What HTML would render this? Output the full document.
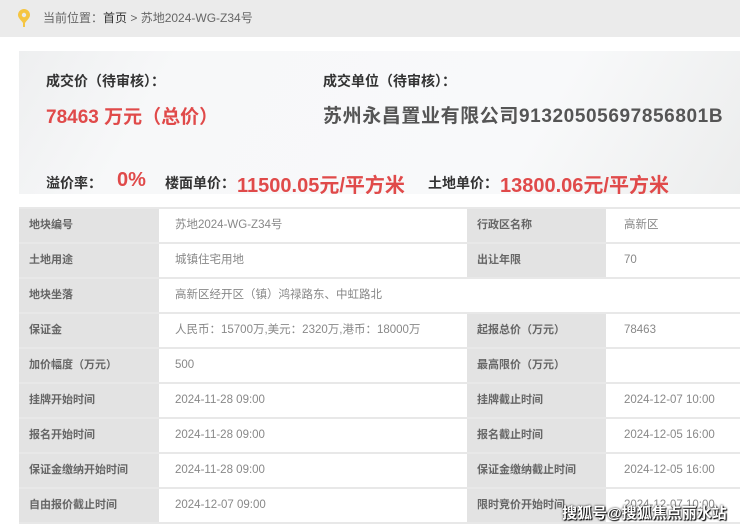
<!DOCTYPE html>
<html><head><meta charset="utf-8"><style>
*{margin:0;padding:0;box-sizing:border-box}
body{width:740px;height:529px;overflow:hidden;background:#fff;font-family:"Liberation Sans","Noto Sans CJK SC",sans-serif;position:relative}
.hdr{position:absolute;left:0;top:0;width:740px;height:37px;background:#ebebeb;font-size:12px;color:#666;line-height:37px;padding-left:43px}
.hdr b{font-weight:normal;color:#333}
.pin{position:absolute;left:18px;top:9px}
.box{position:absolute;left:19px;top:51px;width:721px;height:143px;background:linear-gradient(120deg,#eeeff0 0%,#f7f8f9 20%,#f8f9fa 70%,#eceded 100%);overflow:hidden}
.t{position:absolute;white-space:nowrap}
.lbl{font-size:14px;font-weight:bold;color:#333}
.red{color:#e04a4a;font-weight:bold}
.row{position:absolute;left:19px;width:721px;height:35px;border-top:2px solid #e8e8e8;font-size:11.5px}
.row div{position:absolute;top:0;height:33px;line-height:32px;white-space:nowrap}
.a{left:0;width:140px;background:#e3e3e3;color:#666;padding-left:10px;font-weight:bold;font-size:11px}
.b{left:140px;width:308px;color:#888;padding-left:16px}
.c{left:448px;width:139px;background:#e3e3e3;color:#666;padding-left:10px;font-weight:bold;font-size:11px}
.d{left:587px;width:134px;color:#888;padding-left:18px}
.wm{position:absolute;left:562px;top:502px;font-size:15px;font-weight:bold;color:#fff;text-shadow:0 0 2px #000,1px 1px 1px #000;white-space:nowrap}
</style></head><body>
<div class="hdr"><svg class="pin" width="12" height="18" viewBox="0 0 12 18"><path d="M6 0a6 6 0 0 1 6 6c0 3-3 5-5 8v4H5v-4C3 11 0 9 0 6a6 6 0 0 1 6-6z" fill="#f5c542"/><circle cx="6" cy="6" r="2.2" fill="#ebebeb"/></svg>当前位置：<b>首页</b> &gt; 苏地2024-WG-Z34号</div>
<div class="box">
<div class="t lbl" style="left:27px;top:20px">成交价（待审核）：</div>
<div class="t red" style="left:27px;top:51px;font-size:19px">78463 万元（总价）</div>
<div class="t lbl" style="left:304px;top:20px">成交单位（待审核）：</div>
<div class="t" style="left:304px;top:50px;font-size:19px;letter-spacing:0.6px;font-weight:bold;color:#555">苏州永昌置业有限公司91320505697856801B</div>
<div class="t lbl" style="left:27px;top:122px">溢价率：</div>
<div class="t red" style="left:98px;top:118px;font-size:20px">0%</div>
<div class="t lbl" style="left:146px;top:122px">楼面单价：</div>
<div class="t red" style="left:218px;top:118px;font-size:20px">11500.05元/平方米</div>
<div class="t lbl" style="left:409px;top:122px">土地单价：</div>
<div class="t red" style="left:481px;top:118px;font-size:20px">13800.06元/平方米</div>
</div>
<div class="row" style="top:207px"><div class="a">地块编号</div><div class="b">苏地2024-WG-Z34号</div><div class="c">行政区名称</div><div class="d">高新区</div></div>
<div class="row" style="top:242px"><div class="a">土地用途</div><div class="b">城镇住宅用地</div><div class="c">出让年限</div><div class="d">70</div></div>
<div class="row" style="top:277px"><div class="a">地块坐落</div><div class="b" style="width:581px">高新区经开区（镇）鸿禄路东、中虹路北</div></div>
<div class="row" style="top:312px"><div class="a">保证金</div><div class="b">人民币：15700万,美元：2320万,港币：18000万</div><div class="c">起报总价（万元）</div><div class="d">78463</div></div>
<div class="row" style="top:347px"><div class="a">加价幅度（万元）</div><div class="b">500</div><div class="c">最高限价（万元）</div><div class="d"></div></div>
<div class="row" style="top:382px"><div class="a">挂牌开始时间</div><div class="b">2024-11-28 09:00</div><div class="c">挂牌截止时间</div><div class="d">2024-12-07 10:00</div></div>
<div class="row" style="top:417px"><div class="a">报名开始时间</div><div class="b">2024-11-28 09:00</div><div class="c">报名截止时间</div><div class="d">2024-12-05 16:00</div></div>
<div class="row" style="top:452px"><div class="a">保证金缴纳开始时间</div><div class="b">2024-11-28 09:00</div><div class="c">保证金缴纳截止时间</div><div class="d">2024-12-05 16:00</div></div>
<div class="row" style="top:487px;border-bottom:2px solid #e8e8e8;height:37px"><div class="a">自由报价截止时间</div><div class="b">2024-12-07 09:00</div><div class="c">限时竞价开始时间</div><div class="d">2024-12-07 10:00</div></div>
<div class="wm">搜狐号@搜狐焦点丽水站</div>
</body></html>
